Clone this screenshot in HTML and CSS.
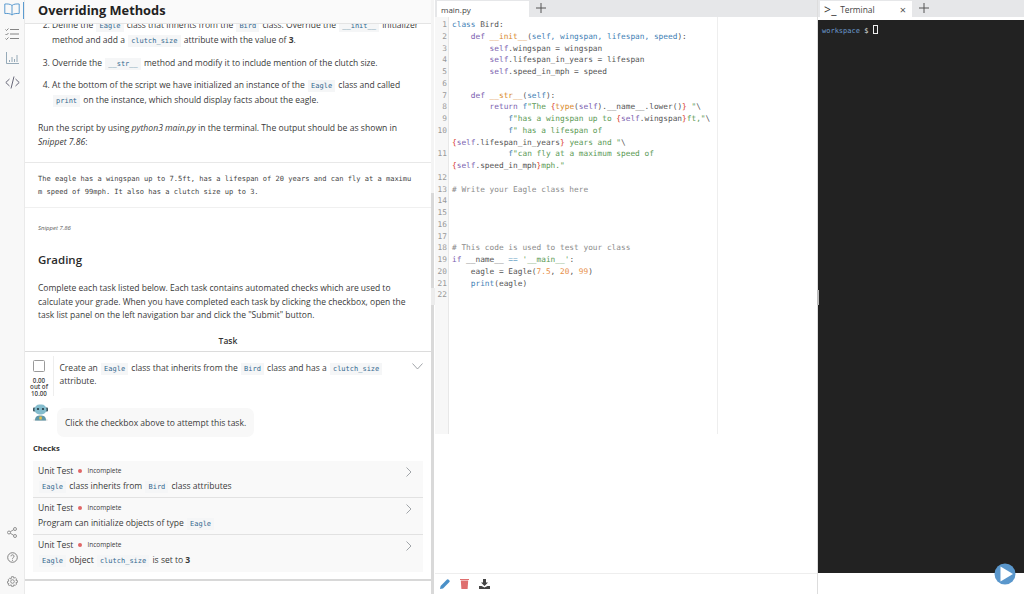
FILE: index.html
```html
<!DOCTYPE html>
<html lang="en">
<head>
    <meta charset="UTF-8">
    <title>Overriding Methods</title>
    <link rel="stylesheet" href="styles.css">
</head>
<body>
<div class="app">
    <nav class="rail">
        <div class="rail-top">
            <svg class="rail-icon active" width="16" height="13" viewBox="0 0 16 13" fill="none" stroke="#5b9bd0" stroke-width="1"><path d="M8 2.500C6.500 1 3.500 .8 .8 1v9.500c2.700-.2 5.700 0 7.200 1.500 1.500-1.500 4.500-1.700 7.200-1.500V1C12.500 .8 9.500 1 8 2.500zM8 2.500V12"/></svg>
            <svg class="rail-icon" width="14" height="12" viewBox="0 0 14 12" fill="none" stroke="#777" stroke-width=".9"><path d="M5 1.500h9M5 6h9M5 10.500h9M.5 1.500l1 1 2-2M.5 6l1 1 2-2M.5 10.500l1 1 2-2"/></svg>
            <svg class="rail-icon" width="13" height="12" viewBox="0 0 13 12" fill="none" stroke="#8aa0b0" stroke-width=".9"><path d="M.5 0v11.500H13M3.500 10V8M6 10V5M8.500 10V7M11 10V3"/></svg>
            <svg class="rail-icon" width="15" height="13" viewBox="0 0 15 13" fill="none" stroke="#667" stroke-width="1"><path d="M4.500 3L.8 6.500 4.500 10M10.500 3l3.700 3.500-3.700 3.500M9 .5L6 12.500"/></svg>
        </div>
        <div class="rail-bottom">
            <svg width="10" height="11" viewBox="0 0 10 11" fill="none" stroke="#888" stroke-width=".9"><circle cx="2" cy="5.500" r="1.500"/><circle cx="8" cy="2" r="1.500"/><circle cx="8" cy="9" r="1.500"/><path d="M3.300 4.700l3.400-2M3.300 6.300l3.400 2"/></svg>
            <svg width="11" height="11" viewBox="0 0 11 11" fill="none" stroke="#777" stroke-width=".9"><circle cx="5.500" cy="5.500" r="4.800"/><path d="M4 4.300c0-2 3-2 3 0 0 1.200-1.500 1.200-1.500 2.500M5.500 7.800v1"/></svg>
            <svg width="11" height="11" viewBox="0 0 11 11" fill="none" stroke="#888" stroke-width=".9"><circle cx="5.500" cy="5.500" r="1.800"/><path d="M4.500 .7h2l.3 1.500 1.400-.7 1.400 1.400-.7 1.400 1.500.3v1.800l-1.500.3.700 1.400-1.400 1.400-1.400-.7-.3 1.500h-2l-.3-1.500-1.400.7L1.200 8.900l.7-1.400L.5 7.200V5.400l1.400-.3-.7-1.400 1.400-1.400 1.400.7z"/></svg>
        </div>
    </nav>

    <section class="guide">
        <header class="guide-head"><h1>Overriding Methods</h1></header>
        <div class="guide-scroll">
            <ol class="steps" start="2">
                <li>Define the <code>Eagle</code> class that inherits from the <code>Bird</code> class. Override the <code>__init__</code> initializer method and add a <code>clutch_size</code> attribute with the value of <b>3</b>.</li>
                <li>Override the <code>__str__</code> method and modify it to include mention of the clutch size.</li>
                <li>At the bottom of the script we have initialized an instance of the <code>Eagle</code> class and called <code>print</code> on the instance, which should display facts about the eagle.</li>
            </ol>
            <p class="run-note">Run the script by using <i>python3 main.py</i> in the terminal. The output should be as shown in <i>Snippet 7.86</i>:</p>
            <pre class="snippet">The eagle has a wingspan up to 7.5ft, has a lifespan of 20 years and can fly at a maximu
m speed of 99mph. It also has a clutch size up to 3.</pre>
            <p class="caption">Snippet 7.86</p>
            <h2>Grading</h2>
            <p class="grading-text">Complete each task listed below. Each task contains automated checks which are used to calculate your grade. When you have completed each task by clicking the checkbox, open the task list panel on the left navigation bar and click the "Submit" button.</p>
            <div class="task-label">Task</div>
            <div class="task">
                <div class="task-main">
                    <div class="task-score">
                        <span class="checkbox"></span>
                        <span class="points">0.00<br>out of<br>10.00</span>
                    </div>
                    <div class="task-text">Create an <code>Eagle</code> class that inherits from the <code>Bird</code> class and has a <code>clutch_size</code> attribute.</div>
                    <svg class="chevron" width="11" height="7" viewBox="0 0 11 7" fill="none" stroke="#8a8f94" stroke-width=".8"><path d="M.5 .5L5.500 6l5-5.500"/></svg>
                </div>
                <div class="hint">
                    <svg class="bot" width="17" height="17" viewBox="0 0 17 17">
                        <ellipse cx="8.500" cy="16" rx="7.500" ry="1" fill="#ddd"/>
                        <path d="M3 16.500c0-4 2-5 5.500-5s5.500 1 5.500 5z" fill="#5f97a8"/>
                        <rect x="1" y="3.500" width="2.500" height="4" rx="1" fill="#3b5560"/>
                        <rect x="13.500" y="3.500" width="2.500" height="4" rx="1" fill="#3b5560"/>
                        <rect x="2.500" y="0.500" width="12" height="10" rx="5" fill="#84bccd"/>
                        <circle cx="6" cy="5" r="1.100" fill="#243640"/>
                        <circle cx="11" cy="5" r="1.100" fill="#243640"/>
                        <rect x="7.300" y="12.500" width="2.500" height="3" rx=".5" fill="#e6c04a"/>
                    </svg>
                    <div class="bubble">Click the checkbox above to attempt this task.</div>
                </div>
                <div class="checks-title">Checks</div>
                <div class="check">
                    <div class="check-top"><span>Unit Test</span><i class="dot"></i><small>Incomplete</small></div>
                    <div class="check-name"><code>Eagle</code> class inherits from <code>Bird</code> class attributes</div>
                    <svg class="check-arrow" width="6" height="10" viewBox="0 0 6 10" fill="none" stroke="#8a8f94" stroke-width=".8"><path d="M.5 .5L5 5 .5 9.500"/></svg>
                </div>
                <div class="check">
                    <div class="check-top"><span>Unit Test</span><i class="dot"></i><small>Incomplete</small></div>
                    <div class="check-name">Program can initialize objects of type <code>Eagle</code></div>
                    <svg class="check-arrow" width="6" height="10" viewBox="0 0 6 10" fill="none" stroke="#8a8f94" stroke-width=".8"><path d="M.5 .5L5 5 .5 9.500"/></svg>
                </div>
                <div class="check">
                    <div class="check-top"><span>Unit Test</span><i class="dot"></i><small>Incomplete</small></div>
                    <div class="check-name"><code>Eagle</code> object <code>clutch_size</code> is set to <b>3</b></div>
                    <svg class="check-arrow" width="6" height="10" viewBox="0 0 6 10" fill="none" stroke="#8a8f94" stroke-width=".8"><path d="M.5 .5L5 5 .5 9.500"/></svg>
                </div>
            </div>
        </div>
        <div class="guide-end"></div>
    </section>

    <div class="splitter"><span class="thumb"></span><span class="grip"></span></div>

    <section class="editor">
        <div class="tabs">
            <div class="tab">main.py</div>
            <svg class="plus" width="10" height="10" viewBox="0 0 10 10" stroke="#555" stroke-width="1"><path d="M5 0v10M0 5h10"/></svg>
        </div>
        <div class="code">
            <div class="gutter">
                <span>1</span><span>2</span><span>3</span><span>4</span><span>5</span><span>6</span><span>7</span><span>8</span><span>9</span><span class="wrap">10</span><span class="wrap">11</span><span>12</span><span>13</span><span>14</span><span>15</span><span>16</span><span>17</span><span>18</span><span>19</span><span>20</span><span>21</span><span>22</span>
            </div>
<pre class="source"><span class="kw2">class</span> Bird:
    <span class="kw">def</span> <span class="fn">__init__</span>(<span class="arg">self, wingspan, lifespan, speed</span>):
        <span class="kw">self</span>.wingspan = wingspan
        <span class="kw">self</span>.lifespan_in_years = lifespan
        <span class="kw">self</span>.speed_in_mph = speed

    <span class="kw">def</span> <span class="fn">__str__</span>(<span class="arg">self</span>):
        <span class="kw">return</span> <span class="arg">f</span><span class="str">"The </span><span class="br">{</span><span class="fn">type</span>(<span class="kw">self</span>).__name__.lower()<span class="br">}</span><span class="str"> "</span>\
            <span class="arg">f</span><span class="str">"has a wingspan up to </span><span class="br">{</span><span class="kw">self</span>.wingspan<span class="br">}</span><span class="str">ft,"</span>\
            <span class="arg">f</span><span class="str">" has a lifespan of </span>
<span class="br">{</span><span class="kw">self</span>.lifespan_in_years<span class="br">}</span><span class="str"> years and "</span>\
            <span class="arg">f</span><span class="str">"can fly at a maximum speed of </span>
<span class="br">{</span><span class="kw">self</span>.speed_in_mph<span class="br">}</span><span class="str">mph."</span>

<span class="cm"># Write your Eagle class here</span>




<span class="cm"># This code is used to test your class</span>
<span class="kw">if</span> __name__ <span class="op">==</span> <span class="str">'__main__'</span>:
    eagle = Eagle(<span class="num">7.5</span>, <span class="num">20</span>, <span class="num">99</span>)
    <span class="fn2">print</span>(eagle)
</pre>
        </div>
        <div class="editor-space"></div>
        <div class="editor-foot">
            <svg width="10" height="10" viewBox="0 0 10 10"><path d="M0 10l.6-3L7 .6a1 1 0 0 1 1.400 0l1 1a1 1 0 0 1 0 1.400L3 9.400z" fill="#4a90c8"/></svg>
            <svg width="9" height="10" viewBox="0 0 9 10"><path d="M0 0h9v1H0zM.8 1.500h7.400L7.600 10H1.400z" fill="#df6f6f"/></svg>
            <svg width="11" height="10" viewBox="0 0 11 10"><path d="M4 0h3v3.500h2L5.500 7 2 3.500h2zM0 7h2.500l3 1.500 3-1.500H11v3H0z" fill="#444"/></svg>
        </div>
    </section>

    <section class="term">
        <span class="term-grip"></span>
        <div class="tabs">
            <div class="tab term-tab">
                <span class="prompt">&gt;_</span><span class="term-name">Terminal</span><span class="close">×</span>
            </div>
            <svg class="plus" width="10" height="10" viewBox="0 0 10 10" stroke="#555" stroke-width="1"><path d="M5 0v10M0 5h10"/></svg>
        </div>
        <div class="term-body"><span class="ws">workspace</span> $ <span class="cursor"></span></div>
        <div class="term-foot">
            <svg class="play" width="22" height="22" viewBox="0 0 22 22"><circle cx="11" cy="11" r="10.500" fill="#5a97cc"/><path d="M6.500 3.500L19 11 6.500 18.500z" fill="#fff"/></svg>
        </div>
    </section>
</div>
</body>
</html>
```

FILE: styles.css
```css
* {
    box-sizing: border-box;
}
html, body {
    margin: 0;
    height: 100%;
    overflow: hidden;
}
body {
    font-family: "Open Sans", Arial, sans-serif;
    font-size: 8.53px;
    line-height: 13.5px;
    color: #3a3a3a;
    background: #fff;
}
.app {
    display: flex;
    width: 1024px;
    height: 594px;
}

/* left icon rail */
.rail {
    width: 25px;
    flex: none;
    background: #f8f8f8;
    border-right: 1px solid #eaeaea;
    display: flex;
    flex-direction: column;
    justify-content: space-between;
    align-items: center;
}
.rail-top {
    display: flex;
    flex-direction: column;
    align-items: center;
    gap: 12px;
    padding: 3px 0 0 0;
    position: relative;
    width: 100%;
}
.rail-top::after {
    content: "";
    position: absolute;
    right: 0;
    top: 2px;
    width: 1px;
    height: 17px;
    background: #5b9bd0;
}
.rail-bottom {
    display: flex;
    flex-direction: column;
    align-items: center;
    gap: 13.5px;
    padding-bottom: 7px;
}

/* guide column */
.guide {
    width: 406px;
    flex: none;
    display: flex;
    flex-direction: column;
    overflow: hidden;
}
.guide-head {
    height: 24px;
    flex: none;
    padding-left: 13px;
    background: #fafafa;
    border-bottom: 1px solid #e4e4e4;
    position: relative;
    z-index: 1;
}
h1 {
    margin: 0;
    font-size: 12.8px;
    line-height: 21px;
    font-weight: 700;
    color: #222;
}
.guide-scroll {
    flex: 1;
    min-height: 0;
    overflow: hidden;
}
.steps {
    margin: -7px 0 0 0;
    padding: 0 10px 0 27px;
}
.steps li {
    margin-bottom: 7.5px;
    line-height: 15px;
}
code {
    font-family: "DejaVu Sans Mono", "Liberation Mono", monospace;
    font-size: 7px;
    line-height: 1;
    color: #33688f;
    background: #f5f6f7;
    padding: 2px 3px;
    margin: 0 1px;
}
.run-note {
    margin: 13.5px 13px 13px;
    font-size: 8.62px;
    line-height: 14px;
}
.snippet {
    margin: 0;
    padding: 9px 13px 9px;
    border-top: 1px solid #e8e8e8;
    border-bottom: 1px solid #f0f0f0;
    font-family: "DejaVu Sans Mono", "Liberation Mono", monospace;
    font-size: 7.05px;
    line-height: 13px;
    color: #444;
}
.caption {
    margin: 14px 13px 0;
    font-size: 6px;
    font-style: italic;
    color: #555;
}
h2 {
    margin: 16px 13px 0;
    font-size: 11.5px;
    line-height: 18px;
    font-weight: 600;
    color: #2b2b2b;
}
.grading-text {
    margin: 12px 13px 0;
}
.task-label {
    margin-top: 12px;
    text-align: center;
    font-weight: 600;
    color: #333;
    line-height: 14px;
}
.task {
    border-top: 1px solid #dcdcdc;
    padding: 0 8px;
    margin-top: 3px;
}
.task-main {
    display: flex;
    align-items: flex-start;
    padding-top: 4px;
}
.task-score {
    width: 21px;
    flex: none;
    display: flex;
    flex-direction: column;
    align-items: center;
    border-right: 1px solid #eee;
    height: 40px;
    padding-right: 8px;
    margin-right: 5.5px;
}
.checkbox {
    width: 12px;
    height: 12px;
    flex: none;
    margin-top: 4px;
    border: 1px solid #9a9a9a;
    border-radius: 1.5px;
    background: #fff;
}
.points {
    font-size: 6.2px;
    line-height: 6.5px;
    text-align: center;
    margin-top: 6px;
    font-weight: 600;
    color: #444;
    white-space: nowrap;
}
.task-text {
    flex: 1;
    padding-top: 5px;
    line-height: 13px;
}
.chevron {
    margin: 7px 0 0 10px;
    flex: none;
}
.hint {
    display: flex;
    align-items: flex-start;
    margin-top: 8px;
    gap: 8px;
    margin-left: -1px;
}
.bot {
    flex: none;
}
.bubble {
    margin-top: 4px;
    background: #f8f8f8;
    border-radius: 7px;
    padding: 8px 8px;
    line-height: 13px;
}
.checks-title {
    margin-top: 5px;
    font-weight: 700;
    font-size: 7.6px;
    line-height: 12px;
    color: #333;
}
.check {
    position: relative;
    margin-top: 7px;
    background: #f9f9f9;
    border-bottom: 1px solid #e2e2e2;
    padding: 3px 5px 0;
    height: 37px;
    line-height: 14px;
    margin-bottom: -7px;
}
.check:last-child {
    border-bottom: 0;
    margin-bottom: 0;
}
.check-top {
    display: flex;
    align-items: center;
    gap: 5px;
}
.check-top small {
    font-size: 6.5px;
}
.check-name {
    margin-top: 1px;
}
.dot {
    width: 4px;
    height: 4px;
    border-radius: 50%;
    background: #e06666;
}
.check-arrow {
    position: absolute;
    right: 11px;
    top: 6px;
}
.guide-end {
    height: 15px;
    flex: none;
    border-top: 2px solid #d8d8d8;
}

/* splitter between columns */
.splitter {
    width: 4px;
    flex: none;
    background: #fff;
    border-left: 3px solid #f4f4f4;
    position: relative;
}
.thumb {
    position: absolute;
    left: -3px;
    top: 193px;
    bottom: 0;
    width: 3px;
    background: #d9d9d9;
}
.grip {
    position: absolute;
    left: -3px;
    top: 288px;
    width: 4px;
    height: 17px;
    background: #ececec;
}

/* editor */
.editor {
    width: 383px;
    flex: none;
    display: flex;
    flex-direction: column;
    border-right: 1px solid #ddd;
}
.tabs {
    height: 17px;
    flex: none;
    background: #e6e7e9;
    display: flex;
    align-items: flex-start;
    padding-left: 2px;
    gap: 7px;
}
.tab {
    width: 92px;
    height: 17px;
    margin-top: 1px;
    background: #fff;
    font-size: 8px;
    line-height: 17px;
    padding-left: 4px;
    color: #444;
}
.plus {
    margin-top: 3px;
}
.code {
    display: flex;
    height: 417px;
    flex: none;
    background-image: linear-gradient(#eee, #eee);
    background-size: 1px 100%;
    background-position: 282px 0;
    background-repeat: no-repeat;
}
.gutter {
    width: 14px;
    flex: none;
    background: #f7f7f7;
    border-right: 1px solid #e8e8e8;
    padding-top: 2px;
    display: flex;
    flex-direction: column;
    font-family: "DejaVu Sans Mono", monospace;
    font-size: 7.8px;
    line-height: 11.75px;
    color: #999;
    text-align: right;
    padding-right: 1px;
}
.gutter .wrap {
    height: 23.5px;
}
.source {
    margin: 0;
    padding: 2px 0 0 3px;
    font-family: "DejaVu Sans Mono", monospace;
    font-size: 7.8px;
    line-height: 11.75px;
    color: #555;
}
.kw { color: #7c5fb0; }
.kw2 { color: #3f7fb5; }
.fn { color: #d98a2b; }
.fn2 { color: #3f7fb5; }
.arg { color: #3f7fb5; }
.str { color: #5b9a55; }
.br { color: #d9402f; }
.cm { color: #8c8c8c; }
.num { color: #e8904a; }
.op { color: #6fa8c8; }
.editor-space {
    flex: 1;
}
.editor-foot {
    height: 21px;
    flex: none;
    border-top: 1px solid #eee;
    display: flex;
    align-items: center;
    gap: 10px;
    padding-left: 5px;
}

/* terminal */
.term {
    flex: 1;
    display: flex;
    flex-direction: column;
    position: relative;
}
.term-grip {
    position: absolute;
    left: -1px;
    top: 290px;
    width: 2px;
    height: 15px;
    background: #bbb;
}
.term-tab {
    display: flex;
    align-items: center;
    padding-left: 4px;
}
.prompt {
    font-size: 12px;
    color: #333;
    margin-right: 3px;
    letter-spacing: .5px;
}
.term-name {
    flex: 1;
    font-size: 8.4px;
}
.close {
    margin-right: 6px;
    font-size: 11px;
    color: #555;
}
.term-body {
    flex: 1;
    margin-top: 3px;
    background: #222;
    color: #ddd;
    padding: 5px 4px;
    font-family: "DejaVu Sans Mono", monospace;
    font-size: 7px;
    line-height: 10px;
}
.ws {
    color: #6c9bd0;
}
.cursor {
    display: inline-block;
    width: 5px;
    height: 9px;
    border: 1px solid #eee;
    vertical-align: -1px;
}
.term-foot {
    height: 21px;
    flex: none;
    background: #fff;
}
.play {
    position: absolute;
    right: 8px;
    bottom: 9px;
}
```
